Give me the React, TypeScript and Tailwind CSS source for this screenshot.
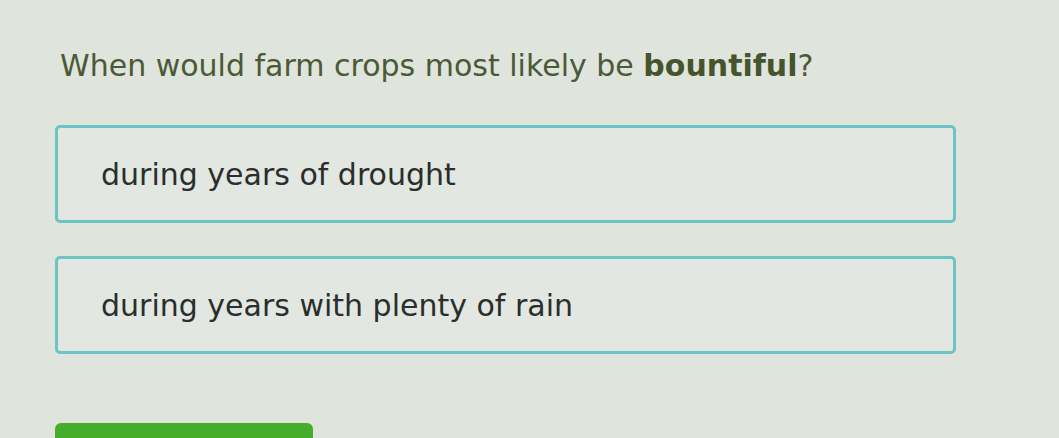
export default function App() {
  const answers = ['during years of drought', 'during years with plenty of rain']

  return (
    <div
      className="h-[438px] w-[1059px] overflow-hidden bg-[#dfe4dd] pl-[55px] pt-[48px]"
      style={{ fontFamily: '"DejaVu Sans", Verdana, sans-serif' }}
    >
      <h1 className="pl-[5px] text-[30px] leading-[36px] text-[#4b5936]">
        When would farm crops most likely be <b className="font-bold text-[#45542c]">bountiful</b>?
      </h1>

      <div className="mt-[41px] flex w-[901px] flex-col gap-[33px]">
        {answers.map((a) => (
          <button
            key={a}
            type="button"
            className="flex h-[98px] items-center rounded-[5px] border-[3px] border-[#6cc4c4] bg-[#e2e7e1] pl-[43px] text-left text-[30px] text-[#2a2e2c]"
          >
            {a}
          </button>
        ))}
      </div>

      <div className="mt-[69px] h-[20px] w-[258px] rounded-t-[6px] bg-[#45ad2a]" />
    </div>
  )
}
